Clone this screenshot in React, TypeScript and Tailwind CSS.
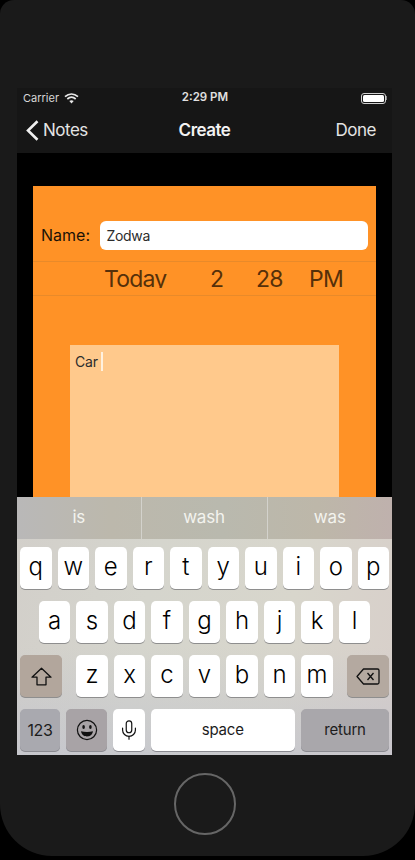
import { Mic } from "lucide-react"

const rowOne = ["q", "w", "e", "r", "t", "y", "u", "i", "o", "p"]
const rowTwo = ["a", "s", "d", "f", "g", "h", "j", "k", "l"]
const rowThree = ["z", "x", "c", "v", "b", "n", "m"]

const LetterKey = ({ label }: { label: string }) => (
    <div className="w-[31.5px] h-[42px] flex items-center justify-center rounded-[5px] bg-white shadow-[0_1px_0_#8e8e8e] text-[24px] font-light leading-none text-black pb-[2px]">
        {label}
    </div>
)

export default function App() {
    return (
        <div className="w-[415px] h-[860px] bg-black overflow-hidden font-['Inter',sans-serif]">
            <div className="w-[415px] h-[856px] bg-[#1a1a1a] rounded-t-[14px] rounded-b-[52px] pt-[88px] pl-[17px] pr-[23px] flex flex-col items-center">
                <div className="w-[375px] h-[667px] shrink-0 flex flex-col bg-black overflow-hidden">
                    {/* status bar */}
                    <div className="h-[20px] shrink-0 bg-[#161616] grid grid-cols-3 items-center pl-[6px] pr-[5px] text-[#d6d6d6]">
                        <div className="flex items-center gap-[5px] text-[11px]">
                            <span>Carrier</span>
                            <svg width="15" height="11" viewBox="0 0 15 11" fill="none" stroke="#e8e8e8" strokeWidth="1.7">
                                <path d="M1 3.6C5 0.1 10 0.1 14 3.6" />
                                <path d="M3.3 6C5.9 3.8 9.1 3.8 11.7 6" />
                                <path d="M7.5 10.5L5.3 8.1C6.6 7.1 8.4 7.1 9.7 8.1Z" fill="#e8e8e8" stroke="none" />
                            </svg>
                        </div>
                        <div className="text-center text-[11.5px] font-semibold text-[#e0e0e0]">2:29 PM</div>
                        <div className="flex justify-end items-center">
                            <div className="w-[25px] h-[11px] rounded-[3px] border border-[#cfcfcf] p-[1px]">
                                <div className="w-full h-full rounded-[1.5px] bg-white" />
                            </div>
                            <div className="w-[1.5px] h-[4px] bg-[#8a8a8a]" />
                        </div>
                    </div>
                    {/* nav bar */}
                    <div className="h-[45px] shrink-0 bg-[#161616] grid grid-cols-3 items-center text-[#e4e4e4] tracking-[-0.5px]">
                        <div className="flex items-center pl-[9px] gap-[4px] text-[17px]">
                            <svg width="13" height="21" viewBox="0 0 13 21" fill="none" stroke="#f0f0f0" strokeWidth="2.6">
                                <path d="M11.5 1.2L2 10.5L11.5 19.8" />
                            </svg>
                            <span>Notes</span>
                        </div>
                        <div className="text-center text-[17px] font-semibold text-[#f2f2f2]">Create</div>
                        <div className="text-right pr-[16px] text-[17px]">Done</div>
                    </div>
                    {/* content */}
                    <div className="flex-1 min-h-0 overflow-hidden px-[16px] pt-[33px]">
                        <div className="h-[400px] bg-[#ff9226]">
                            <div className="h-[76px] border-b border-[#e88a2a] flex items-end pb-[11px] pl-[8px] pr-[8.5px]">
                                <span className="w-[58.5px] h-[30px] shrink-0 flex items-center text-[16px] text-[#1a1206]">Name:</span>
                                <div className="flex-1 h-[29.5px] bg-white rounded-[6px] flex items-center px-[7px] text-[14px] tracking-[-0.3px] text-[#2c2c2c]">
                                    Zodwa
                                </div>
                            </div>
                            <div className="h-[34px] border-b border-[#e88a2a] flex text-[23px] leading-[34px] tracking-[-0.8px] text-[#55300a]">
                                {/* the wheel cuts off the tail of the y */}
                                <span className="w-[177px] h-[26px] overflow-hidden pl-[71px] shrink-0">Today</span>
                                <span className="w-[46px] shrink-0">2</span>
                                <span className="w-[53px] shrink-0">28</span>
                                <span className="shrink-0">PM</span>
                            </div>
                            <div className="pt-[49px] px-[37px]">
                                <div className="h-[200px] bg-[#ffc98c] pl-[5px] pt-[7px] flex items-start gap-[3px] text-[14px] tracking-[-0.2px] text-[#2c2c2c]">
                                    <span className="leading-[18px] pt-[1px]">Car</span>
                                    <div className="w-[2px] h-[19px] bg-[#fff1df]" />
                                </div>
                            </div>
                        </div>
                    </div>
                    {/* keyboard */}
                    <div className="h-[258px] shrink-0 flex flex-col bg-[linear-gradient(100deg,#d2cfca_0%,#d5d5cd_35%,#d8d6cc_70%,#d8cfca_100%)]">
                        <div className="h-[42px] shrink-0 grid grid-cols-[124.5px_126px_1fr] bg-[linear-gradient(90deg,#b9b8b8_0%,#bcb8ac_25%,#b9b9ae_55%,#bdb7a9_80%,#bfb1ad_100%)] text-[17px] tracking-[-0.2px] text-[#f3f3ee]">
                            <div className="flex items-center justify-center border-r border-[#d3d2cc]">is</div>
                            <div className="flex items-center justify-center border-r border-[#d3d2cc]">wash</div>
                            <div className="flex items-center justify-center">was</div>
                        </div>
                        <div className="flex-1 flex flex-col gap-[12px] pt-[8px] bg-[linear-gradient(180deg,rgba(0,0,0,0)_50%,rgba(190,192,205,0.6)_100%)]">
                            <div className="flex justify-center gap-[6px]">
                                {rowOne.map((key) => <LetterKey key={key} label={key} />)}
                            </div>
                            <div className="flex justify-center gap-[6px]">
                                {rowTwo.map((key) => <LetterKey key={key} label={key} />)}
                            </div>
                            <div className="flex justify-between px-[3px]">
                                <div className="w-[42px] h-[42px] flex items-center justify-center rounded-[5px] bg-[#b2a69c] shadow-[0_1px_0_#8e8e8e]">
                                    <svg width="21" height="19" viewBox="0 0 21 19" fill="none" stroke="#111" strokeWidth="1.3" strokeLinejoin="round">
                                        <path d="M10.5 1.2L20 10.2H15V17.8H6V10.2H1Z" />
                                    </svg>
                                </div>
                                <div className="flex gap-[6px]">
                                    {rowThree.map((key) => <LetterKey key={key} label={key} />)}
                                </div>
                                <div className="w-[42px] h-[42px] flex items-center justify-center rounded-[5px] bg-[#b4a9a0] shadow-[0_1px_0_#8e8e8e]">
                                    <svg width="24" height="17" viewBox="0 0 24 17" fill="none" stroke="#111" strokeWidth="1.3" strokeLinejoin="round">
                                        <path d="M7.5 1H21.5C22.4 1 23 1.6 23 2.5V14.5C23 15.4 22.4 16 21.5 16H7.5L1 8.5Z" />
                                        <path d="M11.5 5L17.5 12M17.5 5L11.5 12" />
                                    </svg>
                                </div>
                            </div>
                            <div className="flex gap-[6px] px-[3px]">
                                <div className="w-[40px] h-[42px] flex items-center justify-center rounded-[5px] bg-[#a9a9af] shadow-[0_1px_0_#8a8a90] text-[16px] tracking-[-0.3px] text-[#1c1c1c]">123</div>
                                <div className="w-[41px] h-[42px] flex items-center justify-center rounded-[5px] bg-[#a8a3a6] shadow-[0_1px_0_#8a8a90]">
                                    <svg width="22" height="22" viewBox="0 0 22 22" fill="none" stroke="#111" strokeWidth="1.2">
                                        <circle cx="11" cy="11" r="9.6" />
                                        <ellipse cx="7.6" cy="8" rx="1.3" ry="1.9" fill="#111" stroke="none" />
                                        <ellipse cx="14.4" cy="8" rx="1.3" ry="1.9" fill="#111" stroke="none" />
                                        <path d="M5 12.2C8.5 13.2 13.5 13.2 17 12.2C16.4 15.8 13.9 17.4 11 17.4C8.1 17.4 5.6 15.8 5 12.2Z" fill="#111" stroke="none" />
                                    </svg>
                                </div>
                                <div className="w-[31.5px] h-[42px] flex items-center justify-center rounded-[5px] bg-white shadow-[0_1px_0_#8a8a90]">
                                    <Mic size={22} strokeWidth={1.3} color="#111" />
                                </div>
                                <div className="w-[144.5px] h-[42px] flex items-center justify-center rounded-[5px] bg-white shadow-[0_1px_0_#8a8a90] text-[15px] tracking-[-0.2px] text-[#1c1c1c]">space</div>
                                <div className="flex-1 h-[42px] flex items-center justify-center rounded-[5px] bg-[#a9a7ab] shadow-[0_1px_0_#8a8a90] text-[15px] tracking-[-0.2px] text-[#1c1c1c]">return</div>
                            </div>
                        </div>
                    </div>
                </div>
                {/* home button */}
                <div className="mt-[18px] w-[62px] h-[62px] rounded-full border-[2px] border-[#666666]" />
            </div>
        </div>
    )
}
